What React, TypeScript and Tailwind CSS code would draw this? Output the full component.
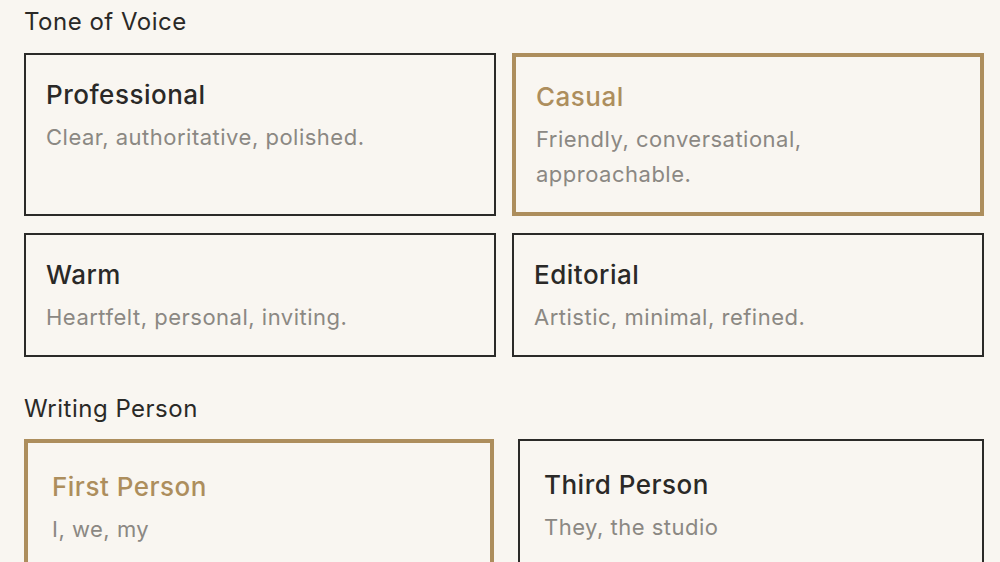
import React from "react";

type Option = { title: string; desc: string; selected?: boolean };

const tones: Option[] = [
  { title: "Professional", desc: "Clear, authoritative, polished." },
  { title: "Casual", desc: "Friendly, conversational, approachable.", selected: true },
  { title: "Warm", desc: "Heartfelt, personal, inviting." },
  { title: "Editorial", desc: "Artistic, minimal, refined." },
];

const persons: Option[] = [
  { title: "First Person", desc: "I, we, my", selected: true },
  { title: "Third Person", desc: "They, the studio" },
];

function CardBody({ o }: { o: Option }) {
  return (
    <>
      <div
        className={
          "text-[26px] leading-[39px] font-medium tracking-[0.5px] " +
          (o.selected ? "text-[#ad8e5d]" : "text-[#2a2927]")
        }
      >
        {o.title}
      </div>
      <div className="mt-[6px] text-[22px] leading-[35px] tracking-[0.5px] text-[#8b8883]">
        {o.desc}
      </div>
    </>
  );
}

export default function App() {
  return (
    <div
      className="min-h-[562px] w-[1000px] bg-[#f9f6f1] pl-6 pr-4 pt-[6px] text-[#2a2927]"
      style={{ fontFamily: "Inter, 'Noto Sans', sans-serif" }}
    >
      <section>
        <h2 className="text-[24px] leading-[32px] font-normal tracking-[0.5px]">
          Tone of Voice
        </h2>
        <div className="mt-[15px] grid grid-cols-2 gap-x-4 gap-y-[17px]">
          {tones.map((o) => (
            <div
              key={o.title}
              className={
                "p-5 " +
                (o.selected
                  ? "border-4 border-[#ad8e5d]"
                  : "border-2 border-[#2b2a28]")
              }
            >
              <CardBody o={o} />
            </div>
          ))}
        </div>
      </section>

      <section className="mt-[36px]">
        <h2 className="text-[24px] leading-[32px] font-normal tracking-[0.5px]">
          Writing Person
        </h2>
        <div className="mt-[14px] flex gap-6">
          {persons.map((o) => (
            <div
              key={o.title}
              className={
                "box-content flex-1 p-6 pb-12 " +
                (o.selected
                  ? "border-4 border-[#ad8e5d]"
                  : "border-2 border-[#2b2a28]")
              }
            >
              <CardBody o={o} />
            </div>
          ))}
        </div>
      </section>
    </div>
  );
}
